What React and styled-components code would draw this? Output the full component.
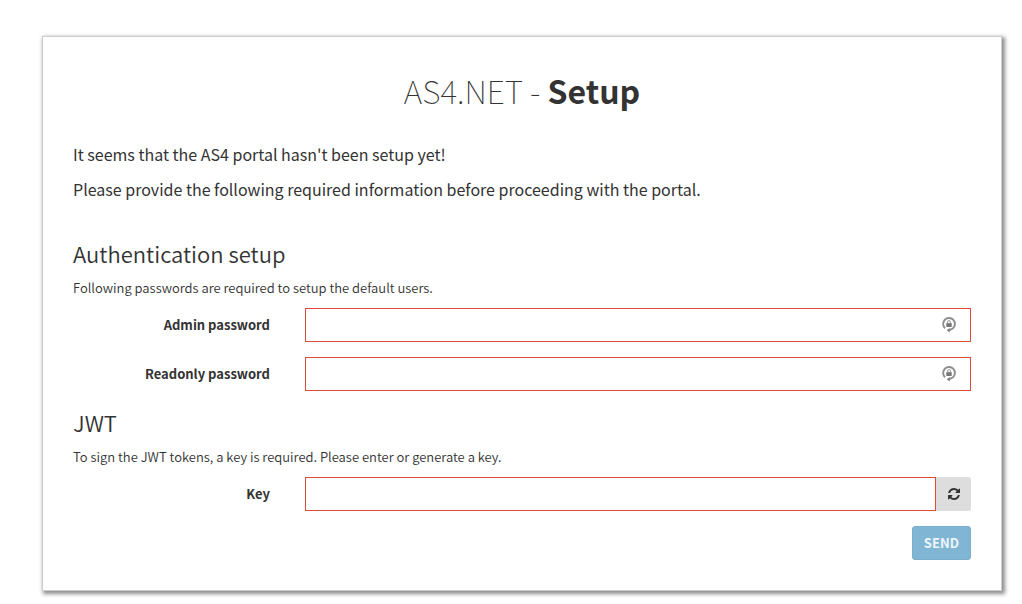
import React, { useState } from 'react';
import styled, { createGlobalStyle } from 'styled-components';

const GlobalStyle = createGlobalStyle`
  *, *::before, *::after { box-sizing: border-box; }
  body {
    margin: 0;
    background: #fff;
    color: #333;
    font-family: "Source Sans Pro", "Noto Sans CJK SC", "Noto Sans", sans-serif;
    font-size: 13px;
    line-height: 20px;
  }
`;

const Page = styled.main`
  padding: 36px 20px 12px 42px;
`;

const Card = styled.form`
  padding: 30px;
  border: 1px solid #ccc;
  background: #fff;
  box-shadow: 2px 2px 4px 1px rgba(0, 0, 0, 0.45);
`;

const Title = styled.h1`
  margin: 0 0 29px;
  font-size: 32px;
  line-height: 46px;
  font-weight: 100;
  text-align: center;
`;

const Strong = styled.b`
  font-weight: 700;
`;

const Lead = styled.p`
  margin: 0 0 10px;
  font-size: 16px;
  line-height: 25px;
`;

const Section = styled.section`
  margin-top: ${(p) => (p.$spaced ? '38px' : '18px')};
`;

const Heading = styled.h3`
  margin: 0 0 12px;
  font-size: 22px;
  line-height: 26px;
  font-weight: 350;
`;

const Hint = styled.p`
  margin: 0 0 10px;
  font-weight: 350;
`;

const Row = styled.div`
  display: grid;
  grid-template-columns: 1fr 3fr;
  margin: 0 -15px 15px;
`;

const Label = styled.label`
  padding: 7px 20px 7px 15px;
  font-weight: 700;
  text-align: right;
`;

const Field = styled.div`
  position: relative;
  display: flex;
  margin: 0 15px;
`;

const Input = styled.input`
  flex: 1;
  min-width: 0;
  height: 34px;
  padding: 6px 12px;
  border: 1px solid #dd4b39;
  border-radius: 0;
  background: #fff;
  color: #555;
  font: inherit;
  outline: none;
`;

const LockMark = styled.svg`
  position: absolute;
  top: 8px;
  right: 14px;
  width: 16px;
  height: 18px;
  pointer-events: none;
`;

const RefreshButton = styled.button`
  display: flex;
  align-items: center;
  justify-content: center;
  width: 35px;
  height: 34px;
  padding: 0;
  border: 0;
  border-radius: 0 3px 3px 0;
  background: #ddd;
  color: #333;
  cursor: pointer;
`;

const Actions = styled.div`
  display: flex;
  justify-content: flex-end;
`;

const SendButton = styled.button`
  height: 34px;
  padding: 0 11px;
  border: 1px solid #7aaecd;
  border-radius: 3px;
  background: #80b5d4;
  color: #eef5fa;
  font: inherit;
  font-weight: 700;
  text-transform: uppercase;
`;

function LockIcon() {
  return (
    <LockMark viewBox="0 0 16 18" aria-hidden="true">
      <path d="M4.100 12.300A5.900 5.900 0 1 1 11.700 12.500L8.500 14.200" fill="none" stroke="#8e8e8e" strokeWidth="1.900" />
      <path d="M8.800 12v4.600L5.600 14.200z" fill="#808080" />
      <path d="M5.300 7.100h5.400v3.900H5.300z" fill="#777" />
      <path d="M6.600 7.400V6a1.400 1.400 0 0 1 2.800 0v1.400" fill="none" stroke="#999" strokeWidth="1" />
    </LockMark>
  );
}

function RefreshIcon() {
  return (
    <svg width="12" height="14" viewBox="0 0 1536 1792" fill="currentColor" aria-hidden="true">
      <path d="M1511 1056q0 5-1 7-64 268-268 434.500t-478 166.500q-146 0-282.500-55t-243.500-157l-129 129q-19 19-45 19t-45-19-19-45v-448q0-26 19-45t45-19h448q26 0 45 19t19 45-19 45l-137 137q71 66 161 102t187 36q134 0 250-65t186-179q11-17 53-117 8-23 30-23h192q13 0 22.500 9.500t9.500 22.500zM1536 256v448q0 26-19 45t-45 19h-448q-26 0-45-19t-19-45 19-45l138-138q-148-137-349-137-134 0-250 65t-186 179q-11 17-53 117-8 23-30 23h-199q-13 0-22.500-9.500t-9.500-22.500v-7q65-268 270-434.500t480-166.500q146 0 284 55.500t245 156.500l130-129q19-19 45-19t45 19 19 45z" />
    </svg>
  );
}

function PasswordRow({ id, label }) {
  return (
    <Row>
      <Label htmlFor={id}>{label}</Label>
      <Field>
        <Input id={id} type="password" autoComplete="new-password" required />
        <LockIcon />
      </Field>
    </Row>
  );
}

function createKey() {
  const bytes = crypto.getRandomValues(new Uint8Array(16));
  return Array.from(bytes, (b) => b.toString(16).padStart(2, '0')).join('');
}

export default function App() {
  const [key, setKey] = useState('');
  return (
    <Page>
      <GlobalStyle />
      <Card onSubmit={(e) => e.preventDefault()}>
        <Title>AS4.NET - <Strong>Setup</Strong></Title>
        <Lead>It seems that the AS4 portal hasn't been setup yet!</Lead>
        <Lead>Please provide the following required information before proceeding with the portal.</Lead>
        <Section $spaced>
          <Heading>Authentication setup</Heading>
          <Hint>Following passwords are required to setup the default users.</Hint>
          <PasswordRow id="admin-password" label="Admin password" />
          <PasswordRow id="readonly-password" label="Readonly password" />
        </Section>
        <Section>
          <Heading>JWT</Heading>
          <Hint>To sign the JWT tokens, a key is required. Please enter or generate a key.</Hint>
          <Row>
            <Label htmlFor="jwt-key">Key</Label>
            <Field>
              <Input id="jwt-key" type="text" value={key} onChange={(e) => setKey(e.target.value)} required />
              <RefreshButton type="button" aria-label="Generate key" onClick={() => setKey(createKey())}>
                <RefreshIcon />
              </RefreshButton>
            </Field>
          </Row>
        </Section>
        <Actions>
          <SendButton type="submit">Send</SendButton>
        </Actions>
      </Card>
    </Page>
  );
}
